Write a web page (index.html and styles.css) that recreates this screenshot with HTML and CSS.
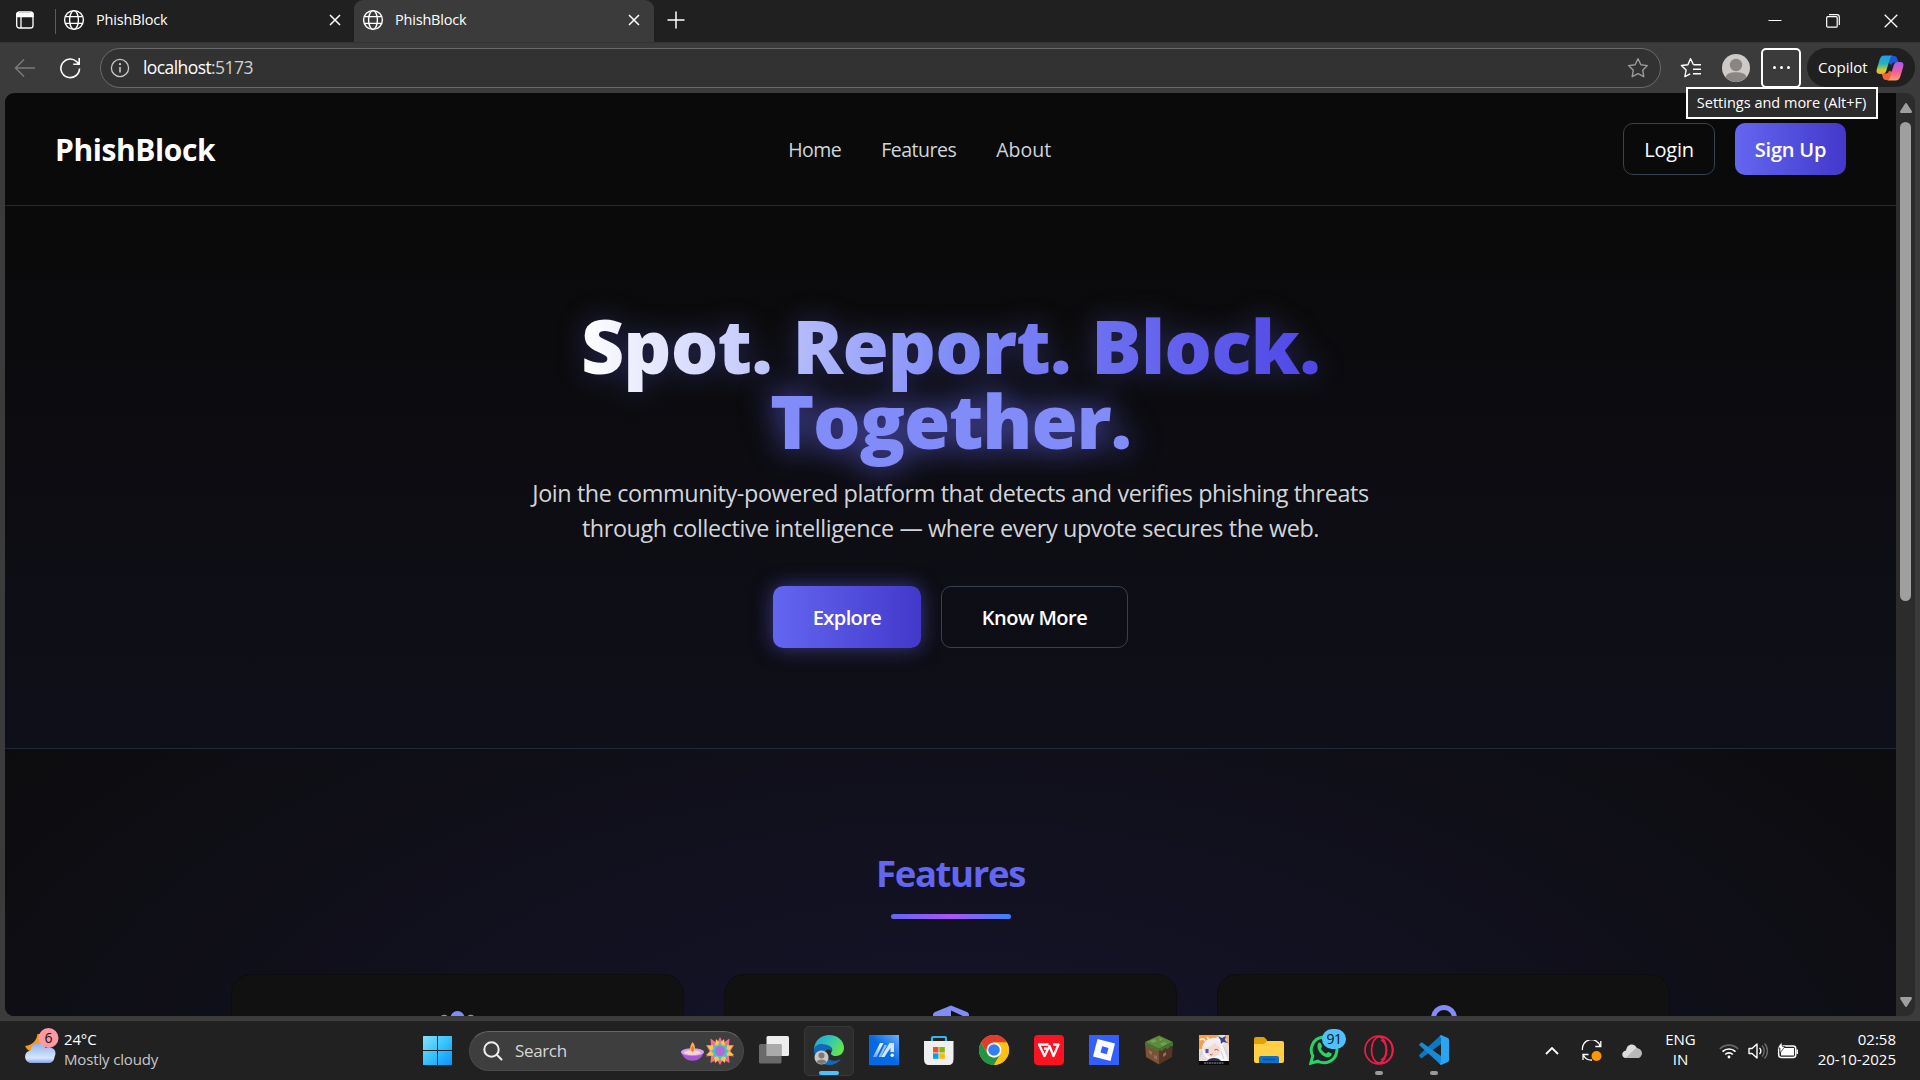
FILE: index.html
```html
<!DOCTYPE html>
<html lang="en">
<head>
<meta charset="utf-8">
<title>PhishBlock</title>
<link rel="stylesheet" href="styles.css">
</head>
<body>
<header class="tabs">
  <svg class="workspaces" width="20" height="20" viewBox="0 0 20 20" fill="none" stroke="#fff" stroke-width="1.3"><rect x="1.7" y="2" width="16.3" height="16" rx="2.6"/><path d="M2 3.5h16v3H2z" fill="#fff"/><path d="M6 7v11"/></svg>
  <span class="divider"></span>
  <div class="tab tab-idle">
    <svg width="22" height="22" viewBox="0 0 22 22" fill="none" stroke="#fff" stroke-width="1.4"><circle cx="11" cy="11" r="9.4"/><ellipse cx="11" cy="11" rx="4.4" ry="9.4"/><path d="M2.4 7.6h17.2M2.4 14.4h17.2"/></svg>
    <span class="tab-title">PhishBlock</span>
    <svg width="12" height="12" viewBox="0 0 12 12" stroke="#fff" stroke-width="1.5"><path d="M1 1l10 10M11 1L1 11"/></svg>
  </div>
  <div class="tab tab-active">
    <svg width="22" height="22" viewBox="0 0 22 22" fill="none" stroke="#fff" stroke-width="1.4"><circle cx="11" cy="11" r="9.4"/><ellipse cx="11" cy="11" rx="4.4" ry="9.4"/><path d="M2.4 7.6h17.2M2.4 14.4h17.2"/></svg>
    <span class="tab-title">PhishBlock</span>
    <svg width="12" height="12" viewBox="0 0 12 12" stroke="#fff" stroke-width="1.5"><path d="M1 1l10 10M11 1L1 11"/></svg>
  </div>
  <svg class="new-tab" width="18" height="18" viewBox="0 0 18 18" stroke="#fff" stroke-width="1.5"><path d="M9 .5v17M.5 9h17"/></svg>
  <div class="window-controls">
    <svg width="14" height="14" viewBox="0 0 14 14" stroke="#fff"><path d="M.5 6.500h13"/></svg>
    <svg width="14" height="14" viewBox="0 0 14 14" fill="none" stroke="#fff" stroke-width="1.2"><rect x=".7" y="2.700" width="10.500" height="10.500" rx="1"/><path d="M3 .7h8a2.300 2.300 0 0 1 2.300 2.300v8"/></svg>
    <svg width="14" height="14" viewBox="0 0 14 14" stroke="#fff" stroke-width="1.3"><path d="M.7.7l12.600 12.600M13.300.7L.7 13.300"/></svg>
  </div>
</header>

<div class="toolbar">
  <svg class="back" width="22" height="22" viewBox="0 0 22 22" fill="none" stroke="#7b7b7b" stroke-width="1.5"><path d="M21 11H1.500M10 2.500L1.500 11l8.500 8.500"/></svg>
  <svg class="reload" width="22" height="22" viewBox="0 0 22 22" fill="none" stroke="#fff" stroke-width="1.6"><path d="M20.500 11.500A9.300 9.300 0 1 1 17.500 4.500L20 7M20.200 1v6.200h-6"/></svg>
  <div class="address">
    <svg width="20" height="20" viewBox="0 0 20 20" fill="none" stroke="#c8c8c8" stroke-width="1.3"><circle cx="10" cy="10" r="8.600"/><path d="M10 9v5.500" stroke-width="1.600"/><circle cx="10" cy="6.200" r=".5" fill="#c8c8c8"/></svg>
    <span class="url">localhost<span class="port">:5173</span></span>
    <svg class="star" width="22" height="22" viewBox="0 0 22 22" fill="none" stroke="#9a9a9a" stroke-width="1.400" stroke-linejoin="round"><path d="M11 1.700l2.900 6 6.500.9-4.700 4.600 1.100 6.500L11 16.600l-5.800 3.100 1.100-6.500L1.600 8.600l6.500-.9z"/></svg>
  </div>
  <svg class="favorites" width="22" height="22" viewBox="0 0 22 22" fill="none" stroke="#fff" stroke-width="1.400" stroke-linejoin="round"><path d="M13.500 7.800L10.500 1.700 7.900 7.700 1.400 8.500l4.700 4.600L4.900 19.700l5.300-2.900M13.500 7.800H21M13 12.300h8M13 16.800h8"/></svg>
  <svg class="avatar" width="28" height="28" viewBox="0 0 28 28"><circle cx="14" cy="14" r="14" fill="#cdcac7"/><circle cx="14" cy="11" r="6.200" fill="#8a8582"/><path d="M3.500 23.200C5 19 9 18.300 14 18.300s9 .7 10.500 4.900A14 14 0 0 1 3.500 23.200z" fill="#8a8582"/></svg>
  <div class="menu-button"><i></i><i></i><i></i>
    <span class="tooltip"><span class="tooltip-text">Settings and more (Alt+F)</span></span>
  </div>
  <div class="copilot">
    <span class="copilot-text">Copilot</span>
    <svg width="28" height="26" viewBox="0 0 28 26"><defs><linearGradient id="ca" x1="0" y1="0" x2="0" y2="1"><stop offset="0" stop-color="#1f9bf0"/><stop offset=".45" stop-color="#25b4b8"/><stop offset=".8" stop-color="#d9c92c"/><stop offset="1" stop-color="#f5a623"/></linearGradient><linearGradient id="cb" x1="0" y1="0" x2="0" y2="1"><stop offset="0" stop-color="#a35cf5"/><stop offset=".5" stop-color="#ee5aa5"/><stop offset="1" stop-color="#ffa05c"/></linearGradient></defs><path d="M8 1h10c2.500 0 3 2 3.700 4l.8 2.500h-4c-2 0-2.700 1-3.200 2.700L13 8z" fill="#1c57d8"/><path d="M20 25H10c-2.500 0-3-2-3.600-4l-.6-2.500H10c2 0 2.400-1 3-2.700l3 1z" fill="#f2633a"/><path d="M8.500.5h8.500c-2 .5-2.700 2-3.300 4l-3.300 11c-.8 2.500-1.900 3.500-4.100 3.500H3.500C.8 19 .1 16.800.8 14.300L3.600 4.800C4.400 2 5.900.5 8.500.5z" fill="url(#ca)"/><path d="M19.500 25.500H11c2-.5 2.700-2 3.300-4l3.300-11c.8-2.500 1.900-3.500 4.100-3.500h2.800c2.700 0 3.400 2.200 2.700 4.700l-2.800 9.500c-.8 2.800-2.300 4.300-4.900 4.300z" fill="url(#cb)"/></svg>
  </div>
</div>

<div class="frame">
  <div class="viewport">
    <main class="page">
      <nav class="navbar">
        <div class="logo">PhishBlock</div>
        <div class="links"><span class="link-home">Home</span><span class="link-features">Features</span><span class="link-about">About</span></div>
        <div class="auth"><span class="btn login">Login</span><span class="btn signup">Sign Up</span></div>
      </nav>
      <section class="hero">
        <h1><span class="headline">Spot. Report. Block.</span><br><span class="together">Together.</span></h1>
        <p>Join the community-powered platform that detects and verifies phishing threats<br>through collective intelligence — where every upvote secures the web.</p>
        <div class="cta"><span class="btn explore">Explore</span><span class="btn more">Know More</span></div>
      </section>
      <section class="features">
        <h2>Features</h2>
        <div class="rule"></div>
        <div class="cards">
          <article class="card"><svg width="50" height="40" viewBox="0 0 50 40" fill="#818cf8"><circle cx="24.500" cy="13" r="7"/><circle cx="11.200" cy="14.200" r="4.500"/><circle cx="37.800" cy="14.200" r="4.500"/><path d="M12.500 36c0-8 5-12 12-12s12 4 12 12z"/></svg></article>
          <article class="card"><svg width="40" height="46" viewBox="0 0 40 46" fill="#818cf8"><path fill-rule="evenodd" d="M20 .5l16 6.600c1.200.6 2 1.500 2 3C38 24 32 35 20 41 8 35 2 24 2 10.100c0-1.500.8-2.400 2-3zM20 5.500V35c8.500-4.500 13-13 13-23.500z"/></svg></article>
          <article class="card"><svg width="40" height="46" viewBox="0 0 40 46" fill="none" stroke="#818cf8" stroke-width="5"><path d="M9.500 22V13a10.500 10.500 0 0 1 21 0v9"/><rect x="5.500" y="20" width="29" height="20" fill="#818cf8"/></svg></article>
        </div>
      </section>
    </main>
    <aside class="scrollbar">
      <svg width="12" height="10" viewBox="0 0 12 10"><path d="M6 0Q6.600 0 7.200 1L12 8.500Q12 10 11 10H1Q0 10 0 8.500L4.800 1Q5.400 0 6 0z" fill="#9f9f9f"/></svg>
      <span class="thumb"></span>
      <svg class="down" width="12" height="10" viewBox="0 0 12 10"><path d="M6 10Q6.600 10 7.200 9L12 1.500Q12 0 11 0H1Q0 0 0 1.500L4.800 9Q5.400 10 6 10z" fill="#9f9f9f"/></svg>
    </aside>
  </div>
</div>

<footer class="taskbar">
  <div class="weather">
    <svg width="36" height="38" viewBox="0 0 36 38"><defs><linearGradient id="wc" x1="0" y1="0" x2="0" y2="1"><stop offset="0" stop-color="#8db2f2"/><stop offset=".75" stop-color="#d9e6fb"/><stop offset="1" stop-color="#7ea2e6"/></linearGradient></defs><path d="M12.500 7c-1 7-5 11-12.500 12 2 4 5 6 9 6l11-10-5-8z" fill="#f59a1c"/><path d="M7 36c-9 0-9-12-1-12.500C6 15 18 14 20.500 21c8-2 12 3 9 9-.5 4-3 6-6 6z" fill="url(#wc)"/><circle cx="23.500" cy="11" r="10" fill="#ff99a4"/><text x="23.500" y="16" text-anchor="middle" font-size="14" fill="#111">6</text></svg>
    <div class="weather-text"><span>24°C</span><span class="condition">Mostly cloudy</span></div>
  </div>
  <svg class="start" width="30" height="30" viewBox="0 0 30 30"><defs><linearGradient id="win" x1="0" y1="0" x2="1" y2="1"><stop offset="0" stop-color="#82e2ff"/><stop offset=".5" stop-color="#36c3fb"/><stop offset="1" stop-color="#0a93fb"/></linearGradient></defs><path d="M.5 0H14v14H0V.5zM15 0h13.500q.5 0 .5.500V14H15zM0 15h14v14H.5q-.5 0-.5-.5zM15 15h14v13.500q0 .5-.5.500H15z" fill="url(#win)"/></svg>
  <div class="search">
    <svg width="20" height="20" viewBox="0 0 20 20" fill="none" stroke="#eee" stroke-width="2"><circle cx="8.500" cy="8.500" r="7.200"/><path d="M13.800 13.800L18.500 18.500" stroke-linecap="round"/></svg>
    <span class="search-text">Search</span>
    <svg class="diwali" width="54" height="28" viewBox="0 0 54 28"><path d="M1 14c2 13 21 13 23 0z" fill="#a855d8"/><ellipse cx="12.500" cy="15" rx="11.500" ry="3.800" fill="#d9a0f0"/><ellipse cx="12.500" cy="15.600" rx="8.500" ry="2.300" fill="#f6d8c8"/><path d="M12.500 5c3.500 4 3 8 0 10-3.500-2-3-5 0-10z" fill="#ffb057"/><path d="M12.500 8.500c2 3 1.500 5 0 6.500-2-2-1.500-4 0-6.500z" fill="#f5701f"/><g transform="translate(40 14)"><path d="M0-14l3 6 6.500-4.500L9-5l5-1-3.500 6L14 5.500 9 5l.5 7L3 8.500 0 14l-3-5.500-6.500 3.500.5-7-5 .5L-10.500 0-14-6l5 1-.5-7.500L-3-8z" fill="#f5718b"/><path d="M-4-12l4 4 4-4 1 6 8 .5L9 0l5 4-8 1-1 7-5-4-5 4-1-7-8-1 5-4-4-5.500 8-.5z" fill="#ffc44d"/><path d="M0-9l2.500 3.500L7-6l-.5 4L9 0 6.500 2.500 7 6 2.500 5.500 0 9l-2.500-3.500L-7 6l.5-3.500L-9 0l2.500-2L-7-6l4.500.5z" fill="#3fc5c5"/><circle r="5" fill="#b36adb"/></g></svg>
  </div>
  <div class="apps">
    <div class="app"><svg width="30" height="30" viewBox="0 0 30 30"><rect x="7.500" y="1" width="22.500" height="20" rx="1.500" fill="#ededed"/><rect x="0" y="9" width="22.500" height="19.500" rx="1.500" fill="#777" fill-opacity=".85"/><path d="M7.500 9H22.500V21H7.500z" fill="#aaa"/></svg></div>
    <div class="app app-open current"><svg width="30" height="30" viewBox="0 0 30 30"><defs><linearGradient id="e1" x1="0" y1="0" x2="1" y2=".5"><stop offset="0" stop-color="#1ca0dc"/><stop offset=".5" stop-color="#2ec4bd"/><stop offset="1" stop-color="#63e44e"/></linearGradient></defs><path d="M0 15C0 5 8 0 15 0c9 0 15 6 15 13 0 5-4 8-8 8-4 0-6-2-4.500-4 2-2.500 0-6-4-6C8 11 2 13 0 15z" fill="url(#e1)"/><path d="M0 15C1 9 7 8 12 9.500c4 1 7 4 5.500 7-2.500-4.500-8-1-6 4 2 5 9 7 15.500 3.500C24 28 20 30 15 30 6 30 0 23 0 15z" fill="#1368ba"/><circle cx="7.500" cy="22.500" r="7" fill="#c9c7c4"/><circle cx="7.500" cy="20.500" r="3" fill="#7d7976"/><path d="M2.500 27c1-3.500 9-3.500 10 0a7 7 0 0 1-10 0z" fill="#7d7976"/></svg></div>
    <div class="app"><svg width="30" height="30" viewBox="0 0 30 30"><defs><linearGradient id="ma" x1="0" y1="1" x2="1" y2="0"><stop offset=".5" stop-color="#0469e3"/><stop offset="1" stop-color="#6ab2fb"/></linearGradient><linearGradient id="mb" x1="0" y1="1" x2="0" y2="0"><stop offset="0" stop-color="#6dabf5"/><stop offset="1" stop-color="#fff"/></linearGradient></defs><path d="M0 0h30v30H0z" fill="url(#ma)"/><path d="M4 22L11 8h3.500L7.500 22z" fill="url(#mb)"/><path fill-rule="evenodd" d="M12 22L20.500 8H25v9h-3.500v-4L18 18l-2.500 4z" fill="#d5e7fd"/><path d="M9.500 22l6-12h2.500l-6 12z" fill="#8fc0fa"/><circle cx="23.200" cy="20.300" r="1.700" fill="#fff"/></svg></div>
    <div class="app"><svg width="30" height="30" viewBox="0 0 30 30"><path d="M8 7V3q0-1 1-1h12q1 0 1 1v4" fill="none" stroke="#2fb6ee" stroke-width="2.200"/><path d="M0 6h29.500v18q0 6-5 6H5q-5 0-5-6z" fill="#efefef"/><path d="M9 12h5.500v5.500H9z" fill="#f25022"/><path d="M15.300 12h5.500v5.500h-5.500z" fill="#7fba00"/><path d="M9 18.300h5.500v5.500H9z" fill="#00a4ef"/><path d="M15.300 18.300h5.500v5.500h-5.500z" fill="#ffb900"/></svg></div>
    <div class="app"><svg width="30" height="30" viewBox="0 0 30 30"><circle cx="15" cy="15" r="15" fill="#fbc116"/><path d="M2 7.500A15 15 0 0 1 28 7.500H15l-6.500 11.200z" fill="#e33b2e"/><path d="M2 7.500L8.500 18.700a7.500 7.500 0 0 0 13 0L15 30A15 15 0 0 1 2 7.500z" fill="#229544"/><path d="M15 7.500h13A15 15 0 0 1 15 30l6.500-11.300z" fill="#fbc116"/><circle cx="15" cy="15" r="7.500" fill="#fff"/><circle cx="15" cy="15" r="5.800" fill="#327ff0"/></svg></div>
    <div class="app"><svg width="30" height="30" viewBox="0 0 30 30" fill="none" stroke="#fff" stroke-width="2.300" stroke-linejoin="round"><rect width="30" height="30" rx="4" fill="#fb1322" stroke="none"/><path d="M14.500 9.500H5l5.500 11.500L15.500 11 19.500 21 24.500 9.500H19M10 13.500h3"/></svg></div>
    <div class="app"><svg width="30" height="30" viewBox="0 0 30 30"><path d="M0 0h30v30H0z" fill="#335fff"/><path fill-rule="evenodd" d="M8.500 4L26 8.500 21.500 26 4 21.500zM13.200 11.200l-1.700 6.300 6.300 1.700 1.700-6.300z" fill="#fff"/></svg></div>
    <div class="app"><svg width="30" height="30" viewBox="0 0 30 30"><path d="M1 7L15 .5 29 7 15 14z" fill="#5d8a3b"/><path d="M1 7l14 7v15.500L2 22z" fill="#79523a"/><path d="M29 7l-14 7v15.500L28 22z" fill="#553624"/><path d="M1 7l14 7 14-7v4l-3 0-2 3-3-1-3 3-3-1-3 1-3-3-3 0-2-3-3 0z" fill="#3c7a2c"/><path d="M5 15l3 2v3l-3-2zM10 20l3 1v4l-3-2zM19 19l3-2v3l-3 2z" fill="#9b6f50"/><path d="M6 6l4-2 3 2-4 2zM16 9l4-2 3 1-4 3zM15 3l4 1-3 2z" fill="#74a452"/></svg></div>
    <div class="app"><svg width="30" height="30" viewBox="0 0 30 30"><path d="M0 0h30v30H0z" fill="#e9dedb"/><path d="M0 0h20L4 14H0z" fill="#f7a04b"/><path d="M26 0h4v12z" fill="#f3b17a"/><path d="M3 13Q5 3 15 3t10 10l4 13H18Q5 27 3 13z" fill="#f9f7fb"/><path d="M4.500 13q2-6 9-6 8 0 8 6 0 8-8 9.500-8-1.500-9-9.500z" fill="#f9d9ca"/><path d="M3 13.500Q6 3 14.500 4T23 14q-5-3-7.500-6.500Q12 12.500 3 13.500z" fill="#f0edf6"/><path d="M3 16l-2 6M24 10l4 10M22 16l3 8" stroke="#c9c0d2" stroke-width=".8"/><path d="M6.500 14h3v4h-3z" fill="#4658b0"/><path d="M19 1l4 2 4-2-1 4 3 3-5-1-2 2-.500-4z" fill="#3a4590"/><path d="M15.500 15q2.500-1.500 4 .5M11 19.500q1.500 1 2.500-.3" stroke="#9a5a55" fill="none"/><path d="M8 26q2-3 7-3t7 3z" fill="#2d3054"/><path d="M1 5q3-3 5 1M8 2l2 3" stroke="#fff1dc" stroke-width="1.500" fill="none"/><path d="M0 26h30v4H0z" fill="#090909"/><path d="M5 28h20" stroke="#999" stroke-dasharray="2 .5"/></svg></div>
    <div class="app"><svg width="30" height="30" viewBox="0 0 30 30"><path d="M0 4q0-2 2-2h7q1 0 2 1l2 2v4H0z" fill="#e0a00a"/><path d="M0 9h9q1 0 2-1l2-2h15q2 0 2 2v18q0 2-2 2H2q-2 0-2-2z" fill="#ffd043"/><path d="M5 28v-5q0-2 2-2h16q2 0 2 2v5z" fill="#0f6fc5"/><path d="M9 24.500h12" stroke="#0b4c95" stroke-width="1.300"/></svg></div>
    <div class="app whatsapp"><svg width="30" height="30" viewBox="0 0 30 30"><path d="M1.800 28.200l2-7.200A12.800 12.800 0 1 1 9 26.200z" fill="none" stroke="#25d366" stroke-width="3"/><path d="M9 8.500c1-1.500 2.500-1.300 3 .2l1 2.600c.3.900-1 1.700-1.200 2.300 1.200 2.500 3 4 5.400 5 .8-.3 1.500-1.900 2.300-1.600l2.800 1.300c1.300.7-.3 4-3.300 4C13 22.300 6.500 14 9 8.500z" fill="#25d366"/></svg><span class="badge">91</span></div>
    <div class="app app-open"><svg width="30" height="30" viewBox="0 0 30 30" fill="none" stroke="#ef1c4c" stroke-width="1.700"><circle cx="15" cy="15" r="14"/><ellipse cx="15" cy="15" rx="7.500" ry="13"/><path d="M17.500 2a11 13 0 0 1 0 26M17 5c7 3 7 17 0 20"/></svg></div>
    <div class="app app-open"><svg width="30" height="30" viewBox="0 0 30 30"><path d="M0 20l22-20v9L3 23q-1 .5-1.500 0z" fill="#0a78c2"/><path d="M0 10l2-2.500h1L22 21v9z" fill="#168bd4"/><path d="M22 0l7 3q1 .5 1 2v20q0 1.500-1 2l-7 3-1.500-1.500q1.500-.5 1.500-2v-23Q22 2 20.500 1.500z" fill="#2aa5f2"/></svg></div>
  </div>
  <div class="tray">
    <svg class="chev" width="14" height="9" viewBox="0 0 14 9" fill="none" stroke="#fff" stroke-width="1.800"><path d="M1 8l6-6 6 6"/></svg>
    <svg class="update" width="22" height="22" viewBox="0 0 22 22" fill="none" stroke="#fff" stroke-width="1.300"><path d="M1.500 10A9 9 0 0 1 19 6M19.800 1v5.500h-5.500M2 20v-5.500h5.500M2.500 15.500A9 9 0 0 0 11 20"/><circle cx="15.500" cy="16" r="5" fill="#ff9705" stroke="none"/></svg>
    <svg class="cloud" width="20" height="14" viewBox="0 0 20 14"><path d="M4 14c-5 0-5-7 0-7.500C5-1 13-1.500 15 4.500c6 0 6.500 9 .5 9.500z" fill="#dcdcdc"/><path d="M3.500 14L13 5l2-.5c6 0 6 9 .5 9.500z" fill="#b8b8b8"/></svg>
    <div class="lang"><span>ENG</span><span>IN</span></div>
    <svg class="wifi" width="20" height="16" viewBox="0 0 20 16" fill="none" stroke="#fff" stroke-width="1.700"><path d="M.8 6a13 13 0 0 1 18.400 0" stroke="#666"/><path d="M3.500 8.700a9.200 9.200 0 0 1 13 0M6.200 11.500a5.400 5.400 0 0 1 7.600 0"/><circle cx="10" cy="14" r="1.400" fill="#fff" stroke="none"/></svg>
    <svg class="vol" width="20" height="18" viewBox="0 0 20 18" fill="none" stroke="#fff" stroke-width="1.400" stroke-linejoin="round"><path d="M1 6.500h3L9 2v14l-5-4.500H1zM11.500 6a4 4 0 0 1 0 6"/><path d="M14 3.500a8 8 0 0 1 0 11M16.500 1.500a11 11 0 0 1 0 15" stroke="#6c6c6c"/></svg>
    <svg class="battery" width="22" height="17" viewBox="0 0 22 17"><rect x="1.700" y="4" width="17" height="11.500" rx="2.500" fill="none" stroke="#fff" stroke-width="1.500"/><path d="M4 6h13v7.500H4zM19.500 7.500H21v4.500h-1.500z" fill="#fff"/><path d="M4.500 0L.5 6H3v5l5-6.500H5.500z" fill="#fff" stroke="#222" stroke-width=".7"/></svg>
    <div class="clock"><span>02:58</span><span>20-10-2025</span></div>
  </div>
</footer>
</body>
</html>
```
FILE: styles.css
```css
* { box-sizing: border-box; }
body {
  margin: 0; width: 1920px; height: 1080px; overflow: hidden;
  display: flex; flex-direction: column;
  background: #3b3b3b; color: #fff;
  font-family: "Open Sans", "Noto Sans", sans-serif;
}
svg { display: block; flex: none; }
span { white-space: nowrap; }

.tabs { height: 42px; flex: none; display: flex; align-items: center; background: #202020; padding: 0 22px 0 15px; }
.workspaces { margin-bottom: 2px; }
.divider { width: 1px; height: 25px; margin: 0 0 0 20px; background: #5d5d5d; }
.tab { display: flex; align-items: center; height: 42px; padding-bottom: 2px; }
.tab-idle { width: 298px; padding-left: 7px; padding-right: 13px; }
.tab-active { width: 300px; background: #3b3b3b; border-radius: 9px 9px 0 0; padding-left: 8px; padding-right: 14px; }
.tab-title { flex: 1; margin-left: 11px; padding-bottom: 2px; font-size: 14.5px; letter-spacing: -.2px; }
.new-tab { margin: 0 0 2px 12.5px; }
.window-controls { margin-left: auto; display: flex; gap: 44px; }

.toolbar { height: 51px; flex: none; display: flex; align-items: center; padding: 0 5px 1px 14px; border-top: 1px solid #333; }
.reload { margin-left: 23px; }
.address { width: 1562px; height: 40px; margin-left: 19px; display: flex; align-items: center; border: 1px solid #6b6b6b; border-radius: 20px; background: #323232; padding: 0 11px 0 9px; }
.url { margin-left: 13px; padding-bottom: 2px; font-size: 17.5px; letter-spacing: -.58px; }
.port { color: #d0d0d0; }
.star { margin-left: auto; }
.favorites { margin-left: 19px; }
.avatar { margin-left: 20px; }
.menu-button { position: relative; width: 40px; height: 40px; margin-left: 11px; display: flex; justify-content: center; align-items: center; gap: 4px; border: 2px solid #fff; border-radius: 5px; }
.menu-button i { width: 3px; height: 3px; border-radius: 50%; background: #fff; }
.tooltip { position: absolute; z-index: 2; right: -79px; top: 37px; width: 192px; height: 32px; display: flex; align-items: center; justify-content: center; background: #2c2c2c; border: 2px solid #fff; font-size: 14.5px; padding-right: 1px; }
.copilot { width: 108px; height: 39px; margin-left: 6px; padding: 0 11px 0 11px; display: flex; align-items: center; justify-content: space-between; background: #202020; border-radius: 20px; font-size: 15px; }
.copilot-text { padding-bottom: 2px; }

.frame { height: 927px; flex: none; padding: 0 5px 4px; }
.viewport { height: 923px; display: flex; overflow: hidden; border-radius: 9px; }
.page { width: 1891px; display: flex; flex-direction: column; background: #0a0a0a; }
.scrollbar { width: 19px; background: #2c2c2c; display: flex; flex-direction: column; align-items: center; padding: 10px 0 9px; }
.thumb { width: 11px; height: 479px; margin-top: 9px; border-radius: 6px; background: #9f9f9f; }
.down { margin-top: auto; }

.navbar { height: 113px; flex: none; padding: 0 50px; display: flex; align-items: center; justify-content: space-between; border-bottom: 1px solid #1f2937; }
.logo { padding-top: 1px; font-weight: 700; font-size: 30px; letter-spacing: -.4px; }
.links { display: flex; gap: 40px; padding: 1px 0 0 1px; font-size: 19.5px; color: #d1d5db; }
.link-home { letter-spacing: -.5px; }
.link-features { letter-spacing: -.5px; }
.auth { display: flex; gap: 20px; }
.btn { display: flex; align-items: center; justify-content: center; border-radius: 10px; font-size: 20px; font-weight: 600; }
.login, .signup { height: 52px; padding-top: 1px; letter-spacing: -.2px; }
.login { width: 92px; border: 1px solid #374151; font-weight: 500; }
.signup { width: 111px; }
.signup, .explore { background: linear-gradient(to right, #6366f1, #4338ca); }

.hero { height: 543px; flex: none; padding-top: 102px; text-align: center; background: linear-gradient(#0a0a0a, #0f0f1a); border-bottom: 1px solid #1f2937; }
h1 { margin: 0; font-size: 75px; line-height: 75px; font-weight: 800; filter: drop-shadow(0 0 14px rgba(99, 102, 241, .3)); }
.headline { letter-spacing: -.9px; word-spacing: 2px; background: linear-gradient(to right, #fff, #818cf8 50%, #4f46e5); background-clip: text; -webkit-background-clip: text; color: transparent; }
.together { letter-spacing: -1.2px; color: #818cf8; filter: drop-shadow(0 0 16px rgba(99, 102, 241, .5)); }
.hero p { margin: 18px 0 0; font-size: 23.4px; letter-spacing: -.4px; line-height: 35px; color: #d1d5db; }
.cta { display: flex; justify-content: center; gap: 20px; margin-top: 40px; }
.cta .btn { height: 62px; }
.explore { width: 148px; letter-spacing: -.6px; box-shadow: 0 0 20px rgba(99, 102, 241, .5); }
.more { width: 187px; letter-spacing: -.5px; border: 1px solid #374151; }

.features { flex: none; height: 1100px; display: flex; flex-direction: column; align-items: center; padding-top: 99px; background: radial-gradient(ellipse 1200px 620px at 50% 380px, #16152e, #0c0c0e); }
h2 { margin: 0; font-size: 36.5px; letter-spacing: -1.35px; line-height: 50px; font-weight: 700; color: #6366f1; }
.rule { width: 120px; height: 5px; margin-top: 16px; border-radius: 3px; background: linear-gradient(to right, #6366f1, #a855f7, #3b82f6); }
.cards { display: flex; gap: 40px; margin-top: 55px; }
.card { width: 453px; height: 400px; display: flex; justify-content: center; padding-top: 30px; border: 1px solid #0c0c12; border-radius: 20px; background: #111; }

.taskbar { height: 60px; flex: none; display: flex; align-items: center; background: #212121; border-top: 1px solid #3f3f3f; padding: 0 24px 0 25px; font-size: 15px; }
.weather { display: flex; align-items: center; width: 398px; }
.weather svg { margin-bottom: 9px; }
.weather-text { display: flex; flex-direction: column; margin-left: 3px; padding-bottom: 4px; line-height: 20px; letter-spacing: -.15px; }
.condition { color: #c8c8c8; }
.search { width: 275px; height: 40px; margin-left: 16px; display: flex; align-items: center; background: #3e3e3e; border: 1px solid #4a4a4a; border-top-color: #666; border-radius: 20px; padding: 0 9px 0 13px; }
.search-text { margin-left: 12px; color: #d6d6d6; font-size: 17px; letter-spacing: -.35px; }
.diwali { margin-left: auto; }
.apps { display: flex; gap: 5px; margin-left: 5px; }
.app { position: relative; width: 50px; height: 50px; display: flex; align-items: center; justify-content: center; padding-bottom: 1px; border: 1px solid transparent; border-radius: 5px; }
.app-open::after { content: ""; position: absolute; bottom: 0; width: 8px; height: 4px; border-radius: 2px; background: #9a9a9a; }
.current { background: #2c2c2c; border-color: #383838; }
.current::after { width: 20px; background: #4cc2ff; }
.badge { position: absolute; left: 22px; top: 2px; width: 24px; height: 20px; border-radius: 10px; background: #4cc2ff; color: #111; display: flex; align-items: center; justify-content: center; font-size: 14px; letter-spacing: -.5px; }
.tray { display: flex; align-items: center; margin-left: auto; }
.update { margin-left: 22px; }
.cloud { margin-left: 19px; }
.lang { width: 77px; display: flex; flex-direction: column; align-items: center; padding-bottom: 3px; line-height: 20px; }
.wifi { margin-right: 9px; }
.battery { margin-left: 9px; }
.clock { width: 97px; display: flex; flex-direction: column; align-items: flex-end; padding-bottom: 4px; line-height: 20px; }
```
